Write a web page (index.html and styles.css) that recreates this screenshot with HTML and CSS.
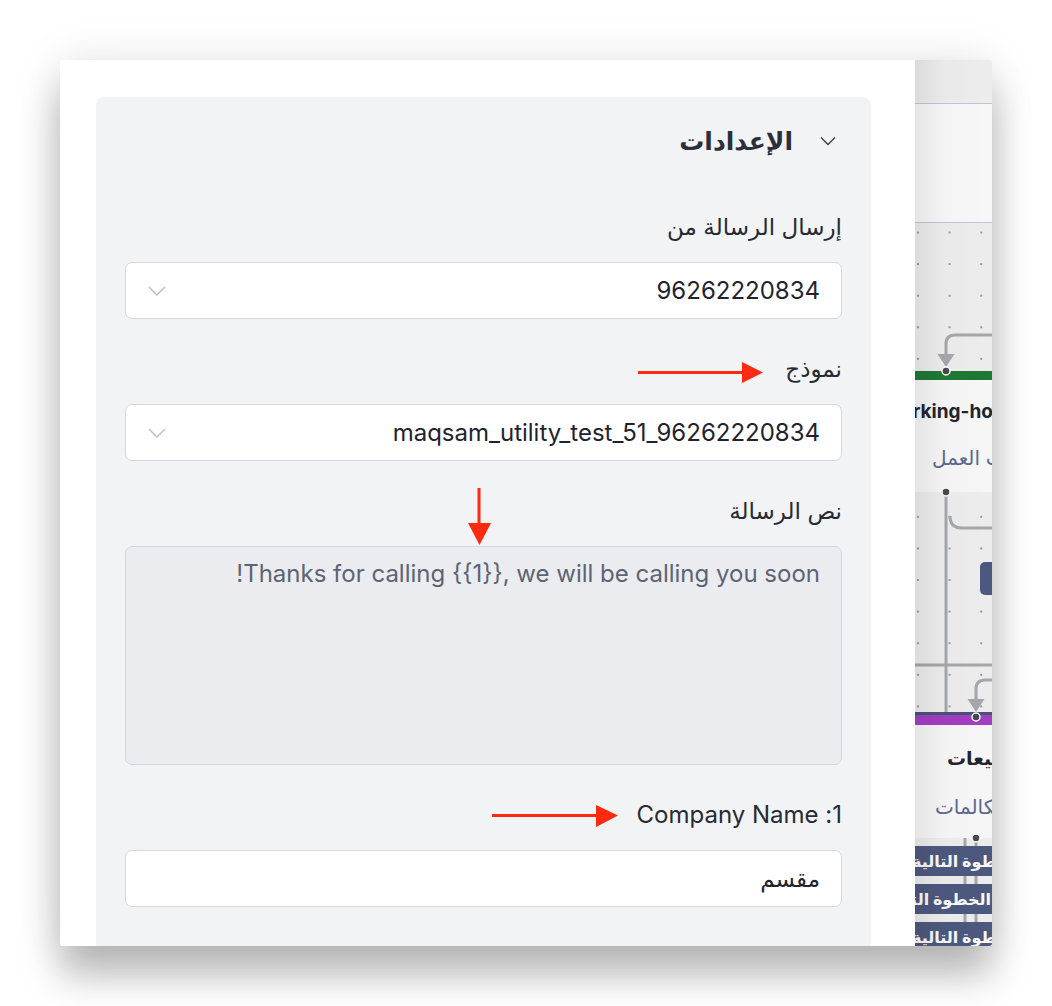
FILE: index.html
```html
<!DOCTYPE html>
<html lang="ar">
<head>
<meta charset="utf-8">
<title>الإعدادات</title>
<link rel="stylesheet" href="styles.css">
</head>
<body>
<div class="window">
  <section class="panel">
    <div class="card" dir="rtl">
      <div class="card-head">
        <svg class="head-chev" width="16" height="10" viewBox="0 0 16 10"><path d="M1 1.5 L8 8.5 L15 1.5" fill="none" stroke="#3a3f4c" stroke-width="1.4"/></svg>
        <h2 class="card-title">الإعدادات</h2>
      </div>

      <div class="field first">
        <label class="label">إرسال الرسالة من</label>
        <div class="select">
          <span class="value">96262220834</span>
          <svg class="sel-chev" width="18" height="10" viewBox="0 0 18 10"><path d="M1 1 L9 9 L17 1" fill="none" stroke="#b9bdcb" stroke-width="1.4"/></svg>
        </div>
      </div>

      <div class="field">
        <label class="label">نموذج</label>
        <div class="select">
          <span class="value">maqsam_utility_test_51_96262220834</span>
          <svg class="sel-chev" width="18" height="10" viewBox="0 0 18 10"><path d="M1 1 L9 9 L17 1" fill="none" stroke="#b9bdcb" stroke-width="1.4"/></svg>
        </div>
      </div>

      <div class="field">
        <label class="label">نص الرسالة</label>
        <div class="textarea">Thanks for calling {{1}}, we will be calling you soon!</div>
      </div>

      <div class="field">
        <label class="label latin">1: Company Name</label>
        <div class="input">مقسم</div>
      </div>

      <svg class="annot" width="775" height="849" viewBox="0 0 775 849">
        <g fill="#ff2a10" stroke="#ff2a10">
          <line x1="542" y1="275.5" x2="652" y2="275.5" stroke-width="3"/>
          <polygon points="646,265 667,275.5 646,286" stroke="none"/>
          <line x1="383" y1="391" x2="383" y2="430" stroke-width="3"/>
          <polygon points="372,426 395,426 383.5,448" stroke="none"/>
          <line x1="396" y1="718.5" x2="505" y2="718.5" stroke-width="3"/>
          <polygon points="500,708 522,718.5 500,730" stroke="none"/>
        </g>
      </svg>
    </div>
  </section>

  <section class="canvas-strip">
    <div class="strip-top"></div>
    <div class="strip-bar"></div>
    <div class="strip-grid"></div>

    <svg class="wires" width="77" height="886" viewBox="0 0 77 886">
      <g fill="none" stroke="#a9aab0" stroke-width="3">
        <path d="M80 275 H40 Q31 275 31 284 V296"/>
        <path d="M31 432 V652"/>
        <path d="M35 456 Q35 468 47 468 H80"/>
        <path d="M0 605 H80"/>
        <path d="M80 620 H70 Q61 620 61 629 V641"/>
        <path d="M50 778 V886"/>
        <path d="M61 778 V886"/>
      </g>
      <g fill="#a9aab0">
        <polygon points="22.5,294 39.5,294 31,307"/>
        <polygon points="52.5,639 69.5,639 61,652"/>
      </g>
    </svg>

    <div class="node node-green">
      <span class="node-name n1">working-hours</span>
      <span class="node-sub s1">ساعات العمل</span>
    </div>
    <div class="node node-purple">
      <span class="node-name n2">المبيعات</span>
      <span class="node-sub s2">المكالمات</span>
    </div>

    <div class="mini-btn"></div>
    <div class="step b1">الخطوة التالية</div>
    <div class="step b2">الخطوة التالية</div>
    <div class="step b3">الخطوة التالية</div>

    <svg class="dots" width="77" height="886" viewBox="0 0 77 886">
      <g fill="#464a52" stroke="#fff" stroke-width="1.5">
        <circle cx="31" cy="311" r="4"/>
        <circle cx="31" cy="432" r="4"/>
        <circle cx="61" cy="657" r="4"/>
        <circle cx="61" cy="778" r="4"/>
      </g>
    </svg>
    <div class="dim"></div>
  </section>
</div>
</body>
</html>
```
FILE: styles.css
```css
* { box-sizing: border-box; }
html, body { margin: 0; padding: 0; background: #ffffff; }
body {
  font-family: Inter, "DejaVu Sans", sans-serif;
  padding-top: 60px;
  min-height: 1006px;
}
.window {
  width: 932px;
  height: 886px;
  margin: 0 auto;
  display: flex;
  overflow: hidden;
  border-radius: 3px;
  box-shadow: 0 30px 38px rgba(0,0,0,0.26), 0 0 46px rgba(0,0,0,0.10);
  background: #fff;
}
.panel {
  width: 855px;
  flex: none;
  background: #fff;
  padding: 37px 44px 0 36px;
  display: flex;
  flex-direction: column;
  position: relative;
  z-index: 2;
}
.card {
  flex: 1;
  background: #f2f3f5;
  border-radius: 8px 8px 0 0;
  padding: 29px 29px 0;
  position: relative;
}
.card-head {
  display: flex;
  align-items: center;
  gap: 27px;
  padding-right: 6px;
  height: 30px;
}
.head-chev { flex: none; }
.card-title {
  margin: 0;
  font-size: 25px;
  font-weight: 700;
  color: #2b2f3a;
  line-height: 30px;
}
.field { margin-top: 35px; }
.field.first { margin-top: 56px; }
.label {
  display: block;
  font-size: 23px;
  line-height: 30px;
  color: #262a34;
  margin-bottom: 20px;
}
.label.latin { font-size: 24px; }
.select, .input {
  height: 57px;
  background: #fff;
  border: 1.5px solid #d2d6e6;
  border-radius: 7px;
  display: flex;
  align-items: center;
  justify-content: space-between;
  padding: 0 21px;
  font-size: 24px;
  color: #1f2330;
}
.input { font-size: 23px; }
.sel-chev { flex: none; margin-left: 1px; }
.value { direction: ltr; unicode-bidi: plaintext; }
.textarea {
  height: 219px;
  background: #ebecef;
  border: 1.5px solid #d2d6e6;
  border-radius: 7px;
  padding: 12px 21px;
  font-size: 24px;
  line-height: 30px;
  color: #5b6475;
}
.annot {
  position: absolute;
  left: 0;
  top: 0;
  pointer-events: none;
}

/* canvas strip */
.canvas-strip {
  width: 77px;
  flex: none;
  position: relative;
  overflow: hidden;
  display: flex;
  flex-direction: column;
  background: #efefef;
  direction: ltr;
}
.strip-top {
  height: 44px;
  background: #f1f1f1;
  border-bottom: 1.5px solid #c5c8db;
  flex: none;
}
.strip-bar {
  height: 119px;
  background: #fcfcfc;
  border-bottom: 1.5px solid #c5c8db;
  flex: none;
}
.strip-grid {
  flex: 1;
  background-color: #f1f1f1;
  background-image: radial-gradient(circle, #9c9c9c 0.9px, transparent 1.4px);
  background-size: 31.6px 31.6px;
  background-position: -12.8px -6.3px;
}
.wires, .dots {
  position: absolute;
  left: 0;
  top: 0;
}
.node {
  position: absolute;
  left: -200px;
  width: 400px;
  background: #fbfbfb;
}
.node-green {
  top: 311px;
  height: 121px;
  border-top: 9px solid #1f7b35;
}
.node-purple {
  top: 652px;
  height: 126px;
  border-top: 3px solid #49547a;
  box-shadow: inset 0 10px 0 #a63fc6;
}
.node-name, .node-sub {
  position: absolute;
  white-space: nowrap;
  line-height: 1;
}
.node-name {
  font-weight: 700;
  font-size: 19px;
  color: #22252e;
}
.node-sub {
  font-size: 20px;
  color: #5c6a93;
}
.n1 { left: 170px; top: 22px; }
.s1 { left: 217px; top: 68px; direction: rtl; }
.n2 { left: 232px; top: 34px; direction: rtl; }
.s2 { left: 220px; top: 82px; direction: rtl; }
.mini-btn {
  position: absolute;
  left: 65px;
  top: 502px;
  width: 40px;
  height: 33px;
  border-radius: 5px;
  background: #4e5a82;
}
.step {
  position: absolute;
  left: -60px;
  width: 220px;
  height: 30px;
  background: #4e5a81;
  color: #fff;
  font-weight: 700;
  font-size: 16px;
  line-height: 30px;
  white-space: nowrap;
  direction: rtl;
}
.b1, .b3 { text-align: left; padding-left: 57px; }
.b1 { top: 786px; }
.b2 { top: 824px; text-align: right; padding-right: 84px; }
.b3 { top: 862px; }
.dim {
  position: absolute;
  inset: 0;
  background: linear-gradient(to right, rgba(0,0,0,0.09), rgba(0,0,0,0.03) 30px, rgba(0,0,0,0.02));
  pointer-events: none;
}
```
